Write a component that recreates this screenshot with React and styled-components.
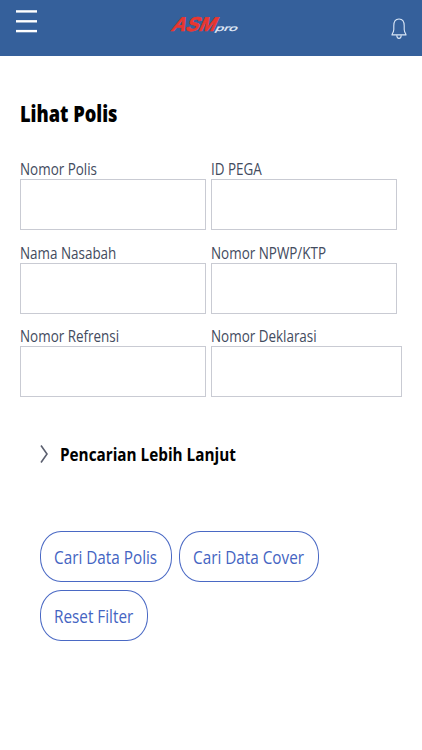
import React from "react";
import styled, { createGlobalStyle } from "styled-components";

const GlobalStyle = createGlobalStyle`
  * { box-sizing: border-box; }
  body {
    margin: 0;
    background: #fff;
    font-family: "Open Sans", "Noto Sans", sans-serif;
  }
`;

const Page = styled.div`
  width: 422px;
  height: 750px;
  overflow: hidden;
  background: #fff;
`;

const Header = styled.header`
  display: flex;
  align-items: flex-start;
  height: 56px;
  padding: 10px 15px 0 16px;
  background: #35609b;
`;

const MenuButton = styled.button`
  display: block;
  width: 21px;
  height: 24px;
  padding: 0;
  border: 0;
  background: none;
`;

const Logo = styled.svg`
  display: block;
  width: 72px;
  height: 24px;
  margin: 4px 0 0 131px;
`;

const BellButton = styled(MenuButton)`
  width: 16px;
  height: 22px;
  margin-top: 8px;
  margin-left: auto;
`;

/* Text is condensed horizontally, anchored at its left edge. */
const Condensed = styled.span`
  display: inline-block;
  white-space: nowrap;
  transform: scaleX(${(p) => p.$scale});
  transform-origin: 0 50%;
`;

const Main = styled.main`
  padding: 41px 20px 0;
`;

const Title = styled.h1`
  margin: 0 0 40px;
  height: 32px;
  font-size: 22px;
  line-height: 32px;
  font-weight: 800;
  color: #000;
`;

const FieldGrid = styled.form`
  display: grid;
  grid-template-columns: 186px 191px;
  column-gap: 5px;
  grid-auto-rows: 83.5px;
`;

const Field = styled.label`
  display: flex;
  flex-direction: column;
  width: ${(p) => (p.$wide ? 191 : 186)}px;
  height: 61px;
  margin-top: -11px;
  font-size: 16.5px;
  color: #434b5e;
`;

const LabelText = styled.span`
  height: 21px;
  line-height: 22px;
`;

const Input = styled.input`
  width: 100%;
  height: 51px;
  flex: none;
  padding: 0 8px;
  border: 1px solid #c9cbd3;
  border-radius: 0;
  background: #fff;
  outline: none;
`;

const Disclosure = styled.div`
  display: flex;
  align-items: center;
  height: 30px;
  margin: 19px 0 62px 20px;
  gap: 11px;
  font-size: 18.5px;
  font-weight: 700;
  color: #000;
`;

const Chevron = styled.svg`
  display: block;
  flex: none;
  width: 9px;
  height: 20px;
`;

const Actions = styled.div`
  display: flex;
  flex-wrap: wrap;
  gap: 8px 7px;
  margin-left: 20px;
`;

const PillButton = styled.button`
  width: ${(p) => p.$width}px;
  height: 51px;
  padding: 1px 0 0 13px;
  border: 1px solid #4a69c4;
  border-radius: 21px / 24px;
  background: #fff;
  color: #4464c2;
  font: 400 19px "Open Sans", "Noto Sans", sans-serif;
  text-align: left;
  overflow: hidden;
`;

const fields = [
  { name: "Nomor Polis" },
  { name: "ID PEGA" },
  { name: "Nama Nasabah" },
  { name: "Nomor NPWP/KTP" },
  { name: "Nomor Refrensi" },
  { name: "Nomor Deklarasi", wide: true },
];

const actions = [
  { name: "Cari Data Polis", width: 132 },
  { name: "Cari Data Cover", width: 140 },
  { name: "Reset Filter", width: 108 },
];

export default function App() {
  return (
    <Page>
      <GlobalStyle />
      <Header>
        <MenuButton aria-label="Menu">
          <svg width="21" height="24" viewBox="0 0 21 24" fill="#fff">
            <rect y="0.2" width="21" height="2.4" />
            <rect y="10.1" width="21" height="2.4" />
            <rect y="19.9" width="21" height="2.4" />
          </svg>
        </MenuButton>
        <Logo viewBox="0 0 72 24" role="img" aria-label="ASM Pro">
          <g transform="translate(2.2 17.4) skewX(-24)">
            <text
              fontFamily="Liberation Sans"
              fontWeight="700"
              fontSize="20"
              fill="#e9362f"
              stroke="#e9362f"
              strokeWidth="0.6"
              textLength="44"
              lengthAdjust="spacingAndGlyphs"
            >
              ASM
            </text>
          </g>
          <g transform="translate(46.5 17) skewX(-28)">
            <text
              fontFamily="Liberation Sans"
              fontSize="8.5"
              fill="#e6eefa"
              stroke="#e6eefa"
              strokeWidth="0.2"
              textLength="22"
              lengthAdjust="spacingAndGlyphs"
            >
              pro
            </text>
          </g>
        </Logo>
        <BellButton aria-label="Notifikasi">
          <svg width="16" height="22" viewBox="0 0 16 22" fill="none" stroke="#dce8f8" strokeWidth="1.1">
            <path d="M1 16.9C1 15.4 2.6 14.8 2.8 11.5V7.8C2.8 3.6 4.7 1 8 1s5.2 2.6 5.2 6.8v3.7c.2 3.3 1.8 3.9 1.8 5.4Z" strokeLinejoin="round" />
            <path d="M5.8 17.2c0 4.2 4.4 4.2 4.4 0" />
          </svg>
        </BellButton>
      </Header>
      <Main>
        <Title>
          <Condensed $scale={0.828}>Lihat Polis</Condensed>
        </Title>
        <FieldGrid>
          {fields.map(({ name, wide }) => (
            <Field key={name} $wide={wide}>
              <LabelText>
                <Condensed $scale={0.814}>{name}</Condensed>
              </LabelText>
              <Input />
            </Field>
          ))}
        </FieldGrid>
        <Disclosure>
          <Chevron viewBox="0 0 9 20" fill="none" stroke="#5c6070" strokeWidth="1.6">
            <path d="M1 1.5 7 10 1 18.5" />
          </Chevron>
          <Condensed $scale={0.826}>Pencarian Lebih Lanjut</Condensed>
        </Disclosure>
        <Actions>
          {actions.map(({ name, width }) => (
            <PillButton key={name} $width={width}>
              <Condensed $scale={0.805}>{name}</Condensed>
            </PillButton>
          ))}
        </Actions>
      </Main>
    </Page>
  );
}
